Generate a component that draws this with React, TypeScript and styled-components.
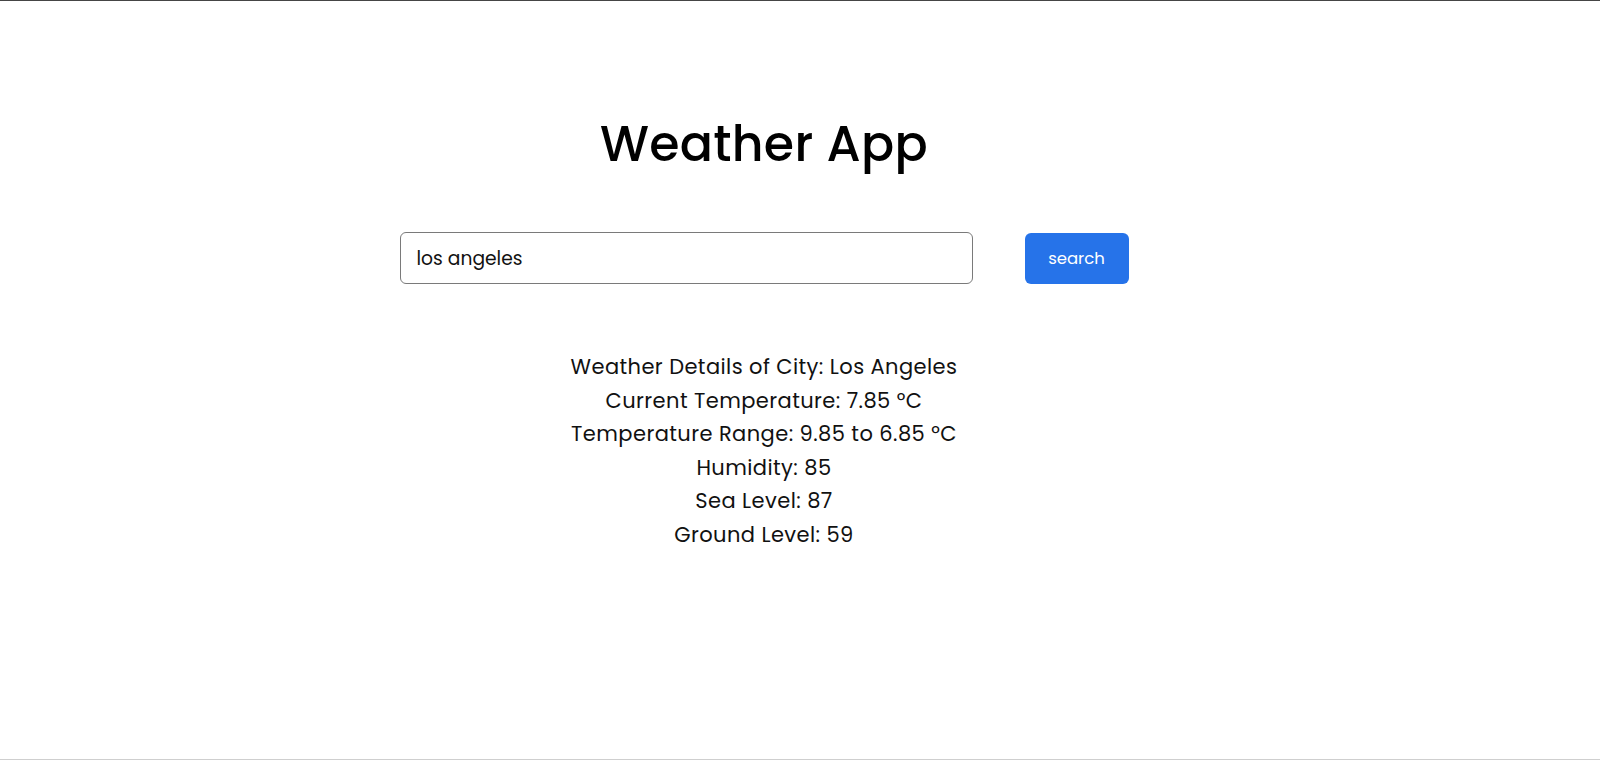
import * as React from "react";
import styled, { createGlobalStyle } from "styled-components";

const GlobalStyle = createGlobalStyle`
  html, body {
    margin: 0;
    padding: 0;
    background: #ffffff;
  }
  * {
    box-sizing: border-box;
  }
`;

const fontStack = `Poppins, "Open Sans", "Noto Sans", sans-serif`;

const Page = styled.div`
  height: 100vh;
  border-top: 1px solid #454545;
  border-bottom: 1px solid #cfcfcf;
  padding-right: 72px;
  display: flex;
  flex-direction: column;
  align-items: center;
  font-family: ${fontStack};
  color: #000;
`;

const Title = styled.h1`
  margin: 114px 0 0;
  font-size: 49px;
  line-height: 58px;
  font-weight: 500;
  letter-spacing: 0.3px;
`;

const SearchRow = styled.form`
  margin-top: 59px;
  display: flex;
  align-items: center;
  gap: 52px;
`;

const SearchInput = styled.input`
  width: 573px;
  height: 52px;
  padding: 0 16px;
  border: 1px solid #7a7a7a;
  border-radius: 6px;
  font-family: ${fontStack};
  font-size: 18.7px;
  color: #111;
  outline: none;
`;

const SearchButton = styled.button`
  width: 104px;
  height: 51px;
  border: none;
  border-radius: 6px;
  background: #2673e9;
  color: #fff;
  font-family: ${fontStack};
  font-size: 16.5px;
  cursor: pointer;
`;

const Details = styled.div`
  margin-top: 66px;
  display: flex;
  flex-direction: column;
  align-items: center;
  font-size: 21px;
  line-height: 33.5px;
  letter-spacing: 0.42px;
  color: #111;
`;

const DetailLine = styled.div``;

const weather = {
  city: "Los Angeles",
  temp: 7.85,
  max: 9.85,
  min: 6.85,
  humidity: 85,
  seaLevel: 87,
  groundLevel: 59,
};

export default function App() {
  const [query, setQuery] = React.useState("los angeles");

  return (
    <>
      <GlobalStyle />
      <Page>
        <Title>Weather App</Title>
        <SearchRow onSubmit={e => e.preventDefault()}>
          <SearchInput
            value={query}
            onChange={e => setQuery(e.target.value)}
          />
          <SearchButton type="submit">search</SearchButton>
        </SearchRow>
        <Details>
          <DetailLine>Weather Details of City: {weather.city}</DetailLine>
          <DetailLine>Current Temperature: {weather.temp} °C</DetailLine>
          <DetailLine>
            Temperature Range: {weather.max} to {weather.min} °C
          </DetailLine>
          <DetailLine>Humidity: {weather.humidity}</DetailLine>
          <DetailLine>Sea Level: {weather.seaLevel}</DetailLine>
          <DetailLine>Ground Level: {weather.groundLevel}</DetailLine>
        </Details>
      </Page>
    </>
  );
}
